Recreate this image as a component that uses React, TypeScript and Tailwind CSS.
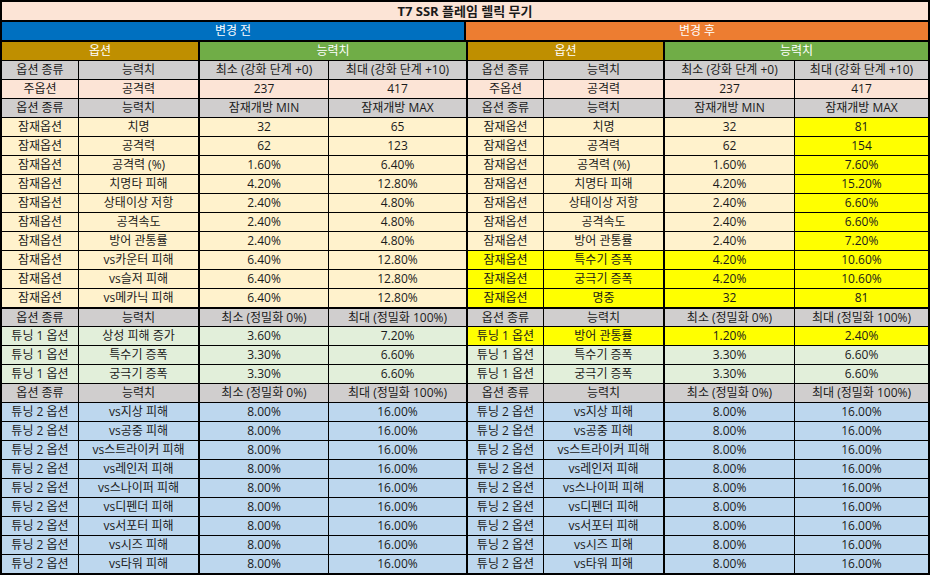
type Row = {
  cells: string[];
  bg: string[];
  thick?: boolean;
};

const W = [
  "w-[76px]",
  "w-[119px]",
  "w-[128px]",
  "w-[137px]",
  "w-[75px]",
  "w-[119px]",
  "w-[129px]",
  "w-[133px]",
];
const ML = ["", "ml-px", "ml-[2px]", "ml-px", "ml-[2px]", "ml-px", "ml-[2px]", "ml-px"];

const GRAY = "bg-[#d0cece]";
const PEACH = "bg-[#fce4d6]";
const CREAM = "bg-[#fff2cc]";
const MINT = "bg-[#e2efda]";
const SKY = "bg-[#bdd7ee]";
const HL = "bg-[#ffff00]";

const fill = (c: string) => [c, c, c, c, c, c, c, c];

const grayHead = (a: string, b: string, thick?: boolean): Row => ({
  cells: ["옵션 종류", "능력치", a, b, "옵션 종류", "능력치", a, b],
  bg: fill(GRAY),
  thick,
});

const potentialLeft = [
  ["치명", "32", "65"],
  ["공격력", "62", "123"],
  ["공격력 (%)", "1.60%", "6.40%"],
  ["치명타 피해", "4.20%", "12.80%"],
  ["상태이상 저항", "2.40%", "4.80%"],
  ["공격속도", "2.40%", "4.80%"],
  ["방어 관통률", "2.40%", "4.80%"],
  ["vs카운터 피해", "6.40%", "12.80%"],
  ["vs슬저 피해", "6.40%", "12.80%"],
  ["vs메카닉 피해", "6.40%", "12.80%"],
];

const potentialRight = [
  ["치명", "32", "81"],
  ["공격력", "62", "154"],
  ["공격력 (%)", "1.60%", "7.60%"],
  ["치명타 피해", "4.20%", "15.20%"],
  ["상태이상 저항", "2.40%", "6.60%"],
  ["공격속도", "2.40%", "6.60%"],
  ["방어 관통률", "2.40%", "7.20%"],
  ["특수기 증폭", "4.20%", "10.60%"],
  ["궁극기 증폭", "4.20%", "10.60%"],
  ["명중", "32", "81"],
];

const tuning1Left = [
  ["상성 피해 증가", "3.60%", "7.20%"],
  ["특수기 증폭", "3.30%", "6.60%"],
  ["궁극기 증폭", "3.30%", "6.60%"],
];
const tuning1Right = [
  ["방어 관통률", "1.20%", "2.40%"],
  ["특수기 증폭", "3.30%", "6.60%"],
  ["궁극기 증폭", "3.30%", "6.60%"],
];

const tuning2 = [
  "vs지상 피해",
  "vs공중 피해",
  "vs스트라이커 피해",
  "vs레인저 피해",
  "vs스나이퍼 피해",
  "vs디펜더 피해",
  "vs서포터 피해",
  "vs시즈 피해",
  "vs타워 피해",
];

const rows: Row[] = [
  grayHead("최소 (강화 단계 +0)", "최대 (강화 단계 +10)"),
  {
    cells: ["주옵션", "공격력", "237", "417", "주옵션", "공격력", "237", "417"],
    bg: fill(PEACH),
  },
  grayHead("잠재개방 MIN", "잠재개방 MAX"),
  ...potentialLeft.map((l, i) => {
    const r = potentialRight[i];
    const whole = i >= 7;
    return {
      cells: ["잠재옵션", ...l, "잠재옵션", ...r],
      bg: [
        CREAM,
        CREAM,
        CREAM,
        CREAM,
        whole ? HL : CREAM,
        whole ? HL : CREAM,
        whole ? HL : CREAM,
        HL,
      ],
    };
  }),
  grayHead("최소 (정밀화 0%)", "최대 (정밀화 100%)", true),
  ...tuning1Left.map((l, i) => {
    const r = tuning1Right[i];
    const hl = i === 0;
    return {
      cells: ["튜닝 1 옵션", ...l, "튜닝 1 옵션", ...r],
      bg: [MINT, MINT, MINT, MINT, hl ? HL : MINT, hl ? HL : MINT, hl ? HL : MINT, hl ? HL : MINT],
    };
  }),
  grayHead("최소 (정밀화 0%)", "최대 (정밀화 100%)"),
  ...tuning2.map((name) => ({
    cells: ["튜닝 2 옵션", name, "8.00%", "16.00%", "튜닝 2 옵션", name, "8.00%", "16.00%"],
    bg: fill(SKY),
  })),
];

function Cell({ i, bg, text, h }: { i: number; bg: string; text: string; h: string }) {
  return (
    <div className={`${W[i]} ${ML[i]} ${bg} ${h} shrink-0 flex items-center justify-center whitespace-nowrap`}>
      {text}
    </div>
  );
}

export default function App() {
  return (
    <div className="w-[932px] h-[577px] bg-white text-[12px] leading-none text-[#1a1a1a] font-['Open_Sans','Noto_Sans_CJK_KR',sans-serif]">
      <div className="w-[930px] bg-black p-[2px] flex flex-col">
        <div className="h-[18px] bg-[#fce4d6] flex items-center justify-center text-[13px] font-bold">
          T7 SSR 플레임 렐릭 무기
        </div>

        <div className="mt-[2px] flex h-[18px] text-white">
          <div className="w-[462px] bg-[#0070c0] flex items-center justify-center">변경 전</div>
          <div className="ml-[2px] w-[462px] bg-[#ed7d31] flex items-center justify-center">변경 후</div>
        </div>

        <div className="mt-[2px] flex h-[18px] text-white">
          <div className="w-[196px] bg-[#bf8f00] flex items-center justify-center">옵션</div>
          <div className="ml-[2px] w-[266px] bg-[#70ad47] flex items-center justify-center">능력치</div>
          <div className="ml-[2px] w-[195px] bg-[#bf8f00] flex items-center justify-center">옵션</div>
          <div className="ml-[2px] w-[263px] bg-[#70ad47] flex items-center justify-center">능력치</div>
        </div>

        {rows.map((row, r) => (
          <div key={r} className={`flex ${row.thick ? "mt-[2px]" : "mt-px"}`}>
            {row.cells.map((text, i) => (
              <Cell
                key={i}
                i={i}
                bg={row.bg[i]}
                text={text}
                h={row.thick ? "h-[17px]" : "h-[18px]"}
              />
            ))}
          </div>
        ))}
      </div>
    </div>
  );
}
